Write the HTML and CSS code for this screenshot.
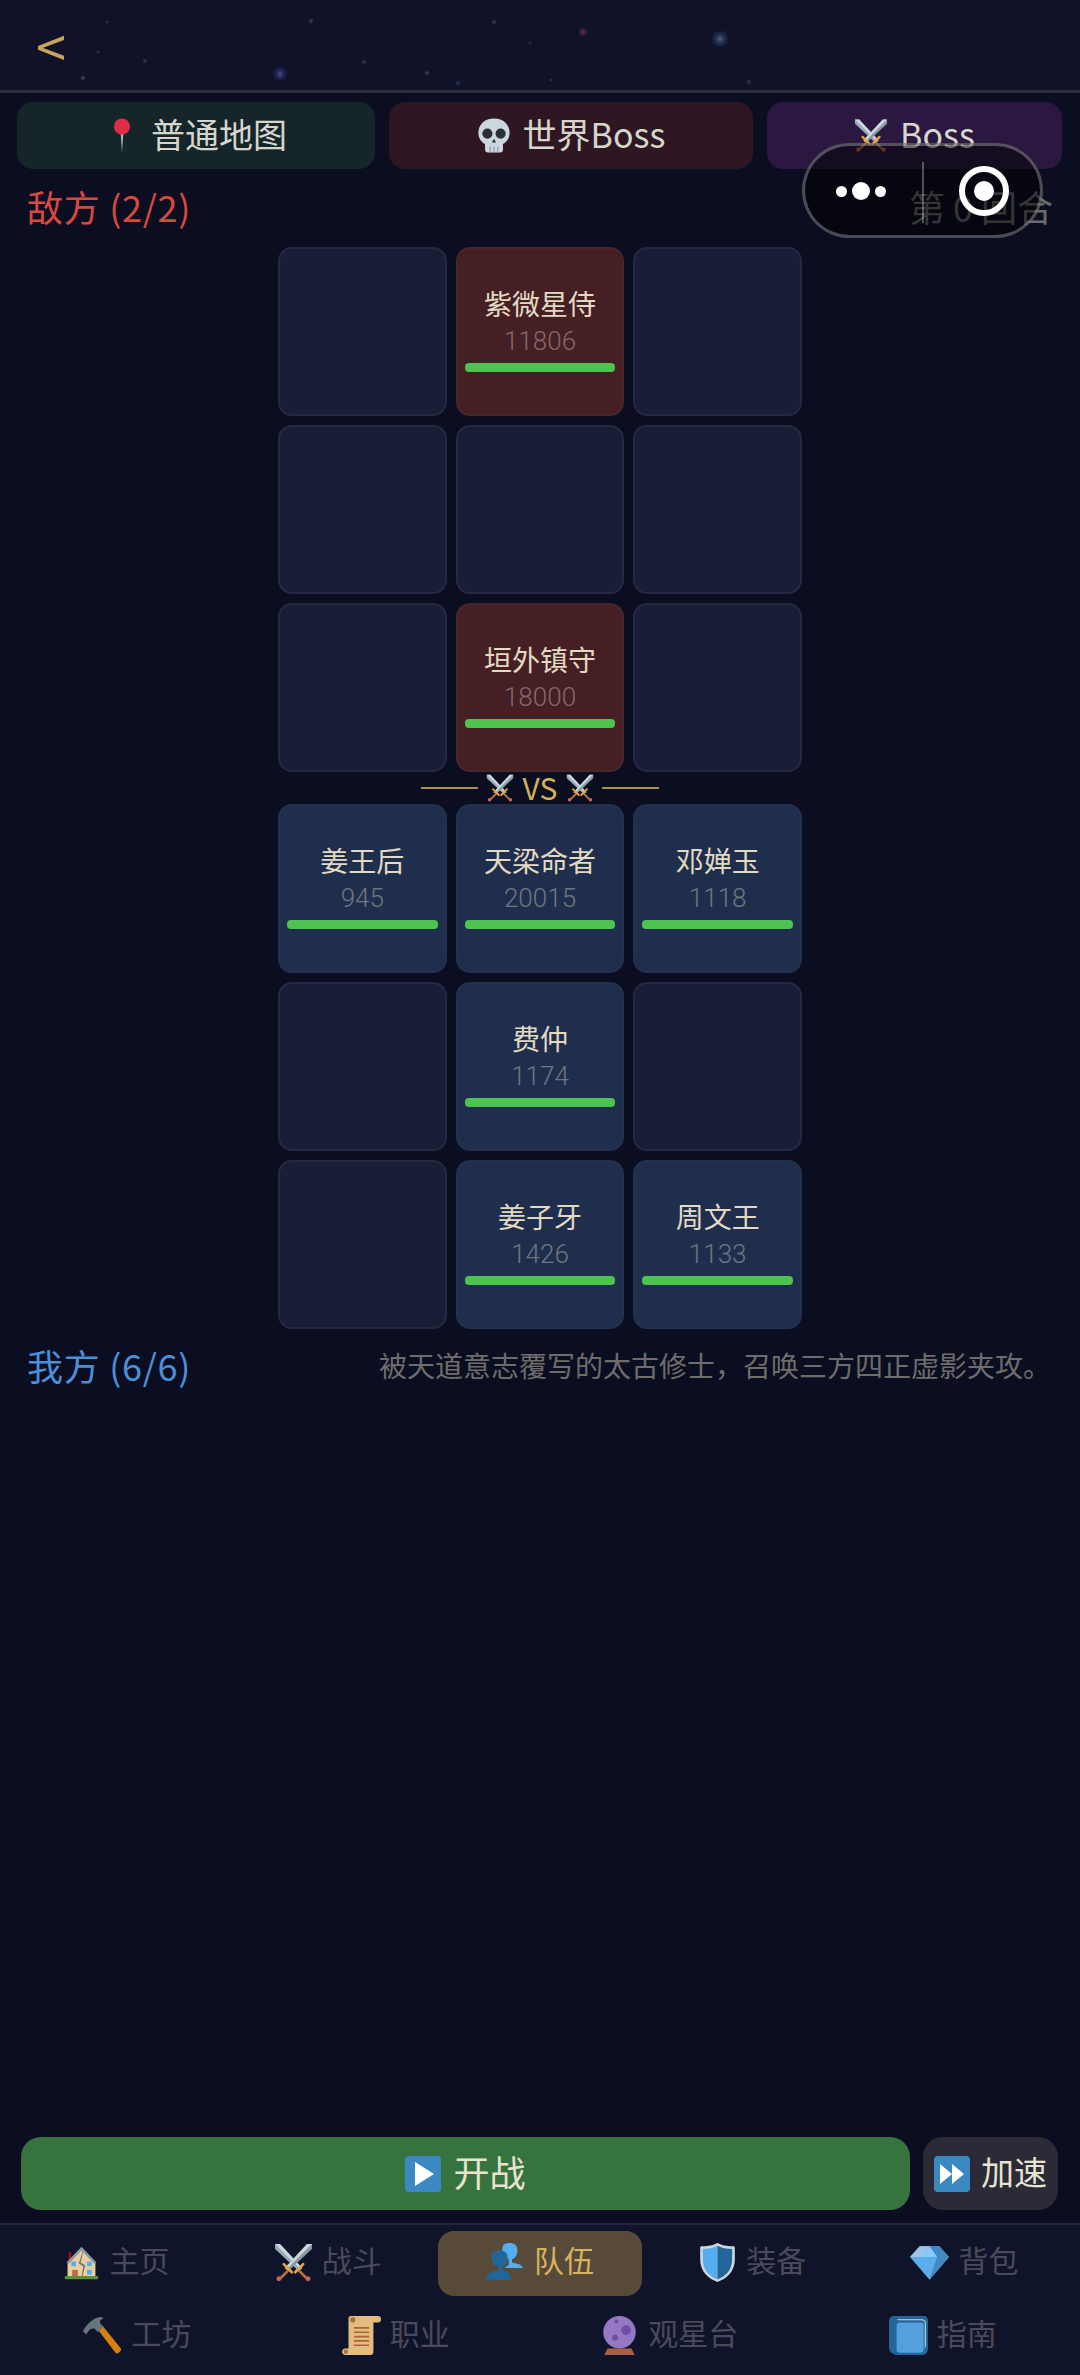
FILE: index.html
```html
<!DOCTYPE html>
<html>
	<head>
		<meta charset="UTF-8">
		<title>队伍</title>
		<link rel="stylesheet" href="styles.css">
	</head>
	<body>
		<svg class="sprite" width="0" height="0">
			<symbol id="i-pin" viewBox="0 0 36 36">
				<path d="M16.400 13h3.200L18 36z" fill="#a9b8c2"/>
				<circle cx="18" cy="8.500" r="8.500" fill="#dd2e44"/>
			</symbol>
			<symbol id="i-skull" viewBox="0 0 36 36">
				<path d="M18 0C8 0 1.500 6.500 1.500 15c0 5.500 2.500 9.500 7 12V33c0 1.500 1.200 3 3 3h13c1.800 0 3-1.500 3-3v-6c4.500-2.500 7-6.500 7-12C34.500 6.500 28 0 18 0z" fill="#ccd6dd"/>
				<circle cx="11" cy="16" r="5.400" fill="#292f33"/>
				<circle cx="25" cy="16" r="5.400" fill="#292f33"/>
				<path d="M18 21.500l-2.200 4h4.400z" fill="#292f33"/>
				<path d="M14 30v6M18 30v6M22 30v6" stroke="#8a99a6" stroke-width="1.200"/>
			</symbol>
			<symbol id="i-swords" viewBox="0 0 36 36">
				<path d="M1 1h4.500L26 23l-3 3L1 5.500z" fill="#99aab5"/>
				<path d="M1 1h4.500L26 23l-1.500 1.500z" fill="#ccd6dd"/>
				<path d="M35 1h-4.500L10 23l3 3L35 5.500z" fill="#8899a6"/>
				<path d="M35 1h-4.500L10 23l1.500 1.500z" fill="#ccd6dd"/>
				<path d="M23.500 26l7 7M12.500 26l-7 7" stroke="#b9703f" stroke-width="2.400" stroke-linecap="round"/>
				<path d="M19.500 27l7.500-7.500M16.500 27L9 19.500" stroke="#e8a33d" stroke-width="2.400" stroke-linecap="round"/>
				<circle cx="31.500" cy="33" r="2.200" fill="#c1694f"/>
				<circle cx="4.500" cy="33" r="2.200" fill="#c1694f"/>
			</symbol>
			<symbol id="i-play" viewBox="0 0 36 36">
				<rect width="36" height="36" rx="4" fill="#3b88c3"/>
				<path d="M10 6l19 12-19 12z" fill="#fff"/>
			</symbol>
			<symbol id="i-fast" viewBox="0 0 36 36">
				<rect width="36" height="36" rx="4" fill="#3b88c3"/>
				<path d="M6 8l12 10-12 10zM18 8l12 10-12 10z" fill="#fff"/>
			</symbol>
			<symbol id="i-house" viewBox="-3 -2 42 40">
				<path d="M4 7h3v9H4z" fill="#a0041e"/>
				<path d="M3 33V17L17 3l3 3 13 11v16z" fill="#e8cf9c"/>
				<path d="M2 18L18 1l16 17-2 1.500L18 5 4 19.500z" fill="#8899a6"/>
				<path d="M20 6l-3 12 5 3-3 12h-1l2-11-5-3 4-12z" fill="#66757f"/>
				<rect x="7" y="17" width="5" height="5" fill="#55acee"/>
				<rect x="24" y="17" width="5" height="5" fill="#55acee"/>
				<rect x="24" y="26" width="5" height="5" fill="#55acee"/>
				<rect x="8" y="26" width="6" height="7" fill="#c1694f"/>
				<rect x="0" y="32.500" width="36" height="3.500" rx="1" fill="#5c913b"/>
			</symbol>
			<symbol id="i-busts" viewBox="0 0 36 36">
				<path d="M21 15c-3 0-6-4-6-9s3-6 7-6 7 2 7 7-3 8-5 8v3c3 1 9 1 10 5H17l4-3z" fill="#55acee"/>
				<path d="M12 22c-4 0-7-4-7-9s3-6 7.500-6S20 9 20 14s-3 8-5 8v3c3 1 8 2 8 9H0c0-7 8-8 12-9z" fill="#226699"/>
			</symbol>
			<symbol id="i-shield" viewBox="0 0 36 36">
				<path d="M18 0C12 3 7 3 3 3c-1 0-1 1-1 2v10c0 12 8 18 16 21 8-3 16-9 16-21V5c0-1 0-2-1-2-4 0-9 0-15-3z" fill="#ccd6dd"/>
				<path d="M18 2.500C13 5 8 5.500 4.500 5.500V15c0 10 6 16 13.500 18.500z" fill="#55acee"/>
				<path d="M18 2.500c5 2.500 10 3 13.500 3V15c0 10-6 16-13.500 18.500z" fill="#226699"/>
			</symbol>
			<symbol id="i-gem" viewBox="0 0 36 36">
				<path d="M0 13L9 3h18l9 10-18 21z" fill="#5dadec"/>
				<path d="M0 13L9 3h9L11 13z" fill="#9cc5e8"/>
				<path d="M18 3h9l9 10H25z" fill="#4289c1"/>
				<path d="M11 13h14L18 3z" fill="#88c9f9"/>
				<path d="M25 13h11L18 34z" fill="#4289c1"/>
			</symbol>
			<symbol id="i-hammer" viewBox="0 0 36 36">
				<path d="M14 13l4-4 17 21c1 2-3 6-5 4z" fill="#d5800f"/>
				<path d="M0 14c3-6 10-13 17-13l2 1-3 2c-1 1 0 3 1 4l2 2-5 5-3-3c-2-1-5 0-6 2l-2 3z" fill="#66757f"/>
			</symbol>
			<symbol id="i-scroll" viewBox="0 0 36 36">
				<path d="M8 0h25c2 0 3 1 3 3s-1 3-3 3h-4v27c0 2-1 3-3 3H3c-2 0-3-2-3-3s1-3 3-3h3V2c0-1 1-2 2-2z" fill="#e3bd7d"/>
				<circle cx="10" cy="3.500" r="2.400" fill="#a86d47"/>
				<circle cx="3.500" cy="33" r="2" fill="#a86d47"/>
				<path d="M11 11h14M11 15h14M11 19h14M11 23h14M11 27h14" stroke="#a9633a" stroke-width="1.500"/>
			</symbol>
			<symbol id="i-ball" viewBox="0 0 36 36">
				<path d="M7 30h22l3 6H4z" fill="#a85f4a"/>
				<circle cx="18" cy="15" r="15" fill="#9578c2"/>
				<circle cx="24" cy="13" r="4.500" fill="#6f4ea3"/>
				<circle cx="14" cy="20" r="2.800" fill="#6f4ea3"/>
				<circle cx="15" cy="5" r="1.800" fill="#6f4ea3"/>
			</symbol>
			<symbol id="i-book" viewBox="0 0 36 36">
				<path d="M5 0h27c2 0 4 2 4 4v26c0 3-2 6-5 6H8c-4 0-8-3-8-7V5c0-3 2-5 5-5z" fill="#226699"/>
				<path d="M7 3h23c2 0 4 1 4 4v20c0 2-1 3-1 3V7c0-2-1-3-3-3H9z" fill="#ccd6dd"/>
				<rect x="7" y="6" width="25" height="28" rx="3" fill="#55a0dc"/>
			</symbol>
		</svg>

		<div class="page">
			<div class="topbar">
				<span class="back">&lt;</span>
			</div>

			<div class="tabs">
				<div class="tab tab-map"><svg class="tab-icon"><use href="#i-pin"/></svg>普通地图</div>
				<div class="tab tab-world"><svg class="tab-icon"><use href="#i-skull"/></svg>世界Boss</div>
				<div class="tab tab-boss"><svg class="tab-icon"><use href="#i-swords"/></svg>Boss</div>
			</div>

			<div class="side-head enemy-head">
				<span class="side enemy-side">敌方 (2/2)</span>
				<span class="round">第 0 回合</span>
			</div>

			<div class="board">
				<div class="cell"></div>
				<div class="cell enemy"><div class="name">紫微星侍</div><div class="hp">11806</div><div class="bar"></div></div>
				<div class="cell"></div>
				<div class="cell"></div>
				<div class="cell"></div>
				<div class="cell"></div>
				<div class="cell"></div>
				<div class="cell enemy"><div class="name">垣外镇守</div><div class="hp">18000</div><div class="bar"></div></div>
				<div class="cell"></div>
			</div>

			<div class="vs">
				<span class="vs-line"></span>
				<svg class="vs-icon"><use href="#i-swords"/></svg>
				<span class="vs-text">VS</span>
				<svg class="vs-icon"><use href="#i-swords"/></svg>
				<span class="vs-line"></span>
			</div>

			<div class="board">
				<div class="cell ally"><div class="name">姜王后</div><div class="hp">945</div><div class="bar"></div></div>
				<div class="cell ally"><div class="name">天梁命者</div><div class="hp">20015</div><div class="bar"></div></div>
				<div class="cell ally"><div class="name">邓婵玉</div><div class="hp">1118</div><div class="bar"></div></div>
				<div class="cell"></div>
				<div class="cell ally"><div class="name">费仲</div><div class="hp">1174</div><div class="bar"></div></div>
				<div class="cell"></div>
				<div class="cell"></div>
				<div class="cell ally"><div class="name">姜子牙</div><div class="hp">1426</div><div class="bar"></div></div>
				<div class="cell ally"><div class="name">周文王</div><div class="hp">1133</div><div class="bar"></div></div>
			</div>

			<div class="side-head ally-head">
				<span class="side ally-side">我方 (6/6)</span>
				<span class="desc">被天道意志覆写的太古修士，召唤三方四正虚影夹攻。</span>
			</div>

			<div class="actions">
				<div class="btn btn-start"><svg class="btn-icon"><use href="#i-play"/></svg>开战</div>
				<div class="btn btn-speed"><svg class="btn-icon"><use href="#i-fast"/></svg>加速</div>
			</div>

			<div class="nav">
				<div class="nav-row nav-top">
					<div class="nav-item"><svg class="nav-icon"><use href="#i-house"/></svg>主页</div>
					<div class="nav-item"><svg class="nav-icon"><use href="#i-swords"/></svg>战斗</div>
					<div class="nav-item active"><svg class="nav-icon"><use href="#i-busts"/></svg>队伍</div>
					<div class="nav-item"><svg class="nav-icon"><use href="#i-shield"/></svg>装备</div>
					<div class="nav-item"><svg class="nav-icon"><use href="#i-gem"/></svg>背包</div>
				</div>
				<div class="nav-row nav-bottom">
					<div class="nav-item"><svg class="nav-icon"><use href="#i-hammer"/></svg>工坊</div>
					<div class="nav-item"><svg class="nav-icon"><use href="#i-scroll"/></svg>职业</div>
					<div class="nav-item"><svg class="nav-icon"><use href="#i-ball"/></svg>观星台</div>
					<div class="nav-item"><svg class="nav-icon"><use href="#i-book"/></svg>指南</div>
				</div>
			</div>

			<!-- 小程序胶囊 -->
			<div class="capsule">
				<span class="dots"><i></i><i class="big"></i><i></i></span>
				<span class="capsule-line"></span>
				<span class="target"></span>
			</div>
		</div>
	</body>
</html>
```

FILE: styles.css
```css
*{
	box-sizing:border-box;
}
html,body{
	margin:0;
	padding:0;
}
body{
	background:#0b0d21;
	font-family:"Noto Sans CJK SC","Noto Sans",sans-serif;
	color:#e6e4d0;
}
.sprite{
	position:absolute;
}
.page{
	position:relative;
	width:1080px;
	height:2375px;
	display:flex;
	flex-direction:column;
	overflow:hidden;
}

/* 顶部星空 */
.topbar{
	height:93px;
	padding-left:36px;
	border-bottom:3px solid #2c2d3c;
	background:
		radial-gradient(circle at 720px 39px,#4a6d8c 0,#2a3a5c 3px,transparent 9px),
		radial-gradient(circle at 583px 32px,#5c3648 0,transparent 5px),
		radial-gradient(circle at 280px 74px,#46508c 0,#262b58 3px,transparent 8px),
		radial-gradient(circle at 494px 22px,#3a4058 0,transparent 3px),
		radial-gradient(circle at 311px 21px,#3a4058 0,transparent 3px),
		radial-gradient(circle at 83px 78px,#454a60 0,transparent 3px),
		radial-gradient(circle at 427px 73px,#3c4560 0,transparent 3px),
		radial-gradient(circle at 145px 61px,#343a54 0,transparent 3px),
		radial-gradient(circle at 364px 62px,#343a54 0,transparent 3px),
		radial-gradient(circle at 749px 82px,#343a54 0,transparent 3px),
		radial-gradient(circle at 458px 83px,#2f3a5c 0,transparent 3px),
		radial-gradient(circle at 107px 22px,#343a54 0,transparent 2px),
		radial-gradient(circle at 98px 52px,#343a54 0,transparent 2px),
		radial-gradient(circle at 530px 43px,#343a54 0,transparent 2px),
		radial-gradient(circle at 551px 80px,#343a54 0,transparent 2px),
		#10122a;
}
.back{
	display:block;
	font-size:54px;
	line-height:90px;
	color:#c9a55c;
}

/* 地图切换 */
.tabs{
	display:flex;
	gap:14px;
	padding:9px 18px 0 17px;
}
.tab{
	height:67px;
	padding-bottom:5px;
	display:flex;
	align-items:center;
	justify-content:center;
	gap:12px;
	border-radius:16px;
	font-size:34px;
	color:#d6d6cc;
}
.tab-icon{
	width:34px;
	height:35px;
	margin-top:5px;
}
.tab-map{
	width:358px;
	background:#15252a;
}
.tab-world{
	width:364px;
	background:#2e1723;
}
.tab-boss{
	width:295px;
	background:#2a1840;
}

.side-head{
	display:flex;
	align-items:center;
	justify-content:space-between;
	padding-bottom:4px;
}
.enemy-head{
	height:78px;
	padding-left:27px;
	padding-right:27px;
}
.ally-head{
	height:76px;
	padding-left:27px;
	padding-right:29px;
}
.side{
	font-size:36px;
	letter-spacing:0.7px;
}
.enemy-side{
	color:#d9483f;
}
.ally-side{
	color:#4a90d9;
}
.round{
	font-size:36px;
	color:#6a6a6a;
}
.desc{
	font-size:28px;
	color:#6e6d6c;
}

/* 九宫格 */
.board{
	width:524px;
	margin:0 auto;
	display:grid;
	grid-template-columns:repeat(3,1fr);
	grid-auto-rows:169px;
	gap:9px;
}
.cell{
	padding:34px 7px 0;
	border:2px solid #262943;
	border-radius:14px;
	background:#1a1d36;
	text-align:center;
}
.enemy{
	background:#451f24;
	border-color:#48262c;
}
.ally{
	background:#1f2e4d;
	border-color:#223150;
}
.name{
	font-size:28px;
	line-height:41px;
	color:#e2dac2;
}
.hp{
	font-family:Roboto,sans-serif;
	font-weight:300;
	font-size:26px;
	line-height:34px;
	color:#72757f;
}
.enemy .hp{
	color:#85686a;
}
.bar{
	height:9px;
	margin-top:5px;
	border-radius:4px;
	background:#4cc44f;
}

.vs{
	height:32px;
	display:flex;
	align-items:center;
	justify-content:center;
	gap:9px;
	font-size:30px;
	color:#d4b057;
}
.vs-text{
	margin-bottom:3px;
}
.vs-line{
	width:57px;
	height:2px;
	margin:0 -1px;
	background:#a8924f;
}
.vs-icon{
	width:28px;
	height:28px;
}

/* 底部按钮 */
.actions{
	margin-top:auto;
	height:86px;
	padding:0 22px 0 21px;
	display:flex;
	gap:13px;
}
.btn{
	height:73px;
	padding-bottom:5px;
	display:flex;
	align-items:center;
	justify-content:center;
	border-radius:20px;
}
.btn-start{
	flex:1;
	gap:12px;
	background:#37733e;
	font-size:36px;
}
.btn-speed{
	width:135px;
	gap:11px;
	background:#2b2a36;
	font-size:33px;
}
.btn-icon{
	width:36px;
	height:36px;
	margin-top:5px;
}

/* 导航 */
.nav{
	height:152px;
	padding:6px 0 7px;
	border-top:2px solid #23243f;
	background:#10142a;
	font-size:30px;
	color:#4a4a5c;
}
.nav-row{
	display:flex;
	height:65px;
}
.nav-top{
	gap:9px;
	padding:0 14px;
}
.nav-top .nav-item{
	flex:1;
}
.nav-bottom{
	margin-top:8px;
	padding:0 8px;
	justify-content:space-around;
}
.nav-item{
	padding-bottom:10px;
	display:flex;
	align-items:center;
	justify-content:center;
	gap:9px;
	border-radius:16px;
}
.nav-icon{
	width:39px;
	height:39px;
	margin-top:7px;
}
.active{
	background:#574a39;
	color:#d9b25f;
}

/* 胶囊 */
.capsule{
	position:absolute;
	left:802px;
	top:143px;
	width:241px;
	height:95px;
	border:3px solid rgba(255,255,255,0.28);
	border-radius:48px;
	background:rgba(0,0,0,0.5);
}
.dots{
	position:absolute;
	left:31px;
	top:36px;
	display:flex;
	align-items:center;
	gap:5px;
}
.dots i{
	width:11px;
	height:11px;
	border-radius:50%;
	background:#fff;
}
.dots i.big{
	width:18px;
	height:18px;
}
.capsule-line{
	position:absolute;
	left:117px;
	top:16px;
	width:2px;
	height:61px;
	background:rgba(255,255,255,0.3);
}
.target{
	position:absolute;
	left:154px;
	top:20px;
	width:50px;
	height:50px;
	border:6px solid #fff;
	border-radius:50%;
}
.target::after{
	content:"";
	position:absolute;
	left:9px;
	top:9px;
	width:20px;
	height:20px;
	border-radius:50%;
	background:#fff;
}
```
